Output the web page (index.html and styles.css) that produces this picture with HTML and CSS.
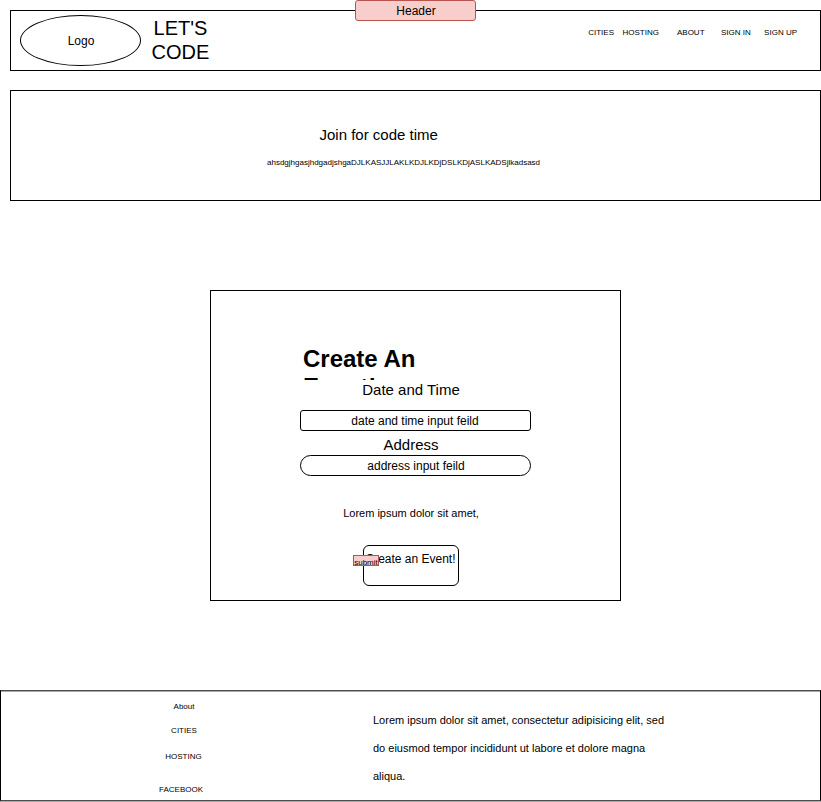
FILE: index.html
```html
<!DOCTYPE html>
<html lang="en">
<head>
<meta charset="utf-8">
<title>Let's Code</title>
<link rel="stylesheet" href="styles.css">
</head>
<body>
<header class="site-header">
  <div class="logo">Logo</div>
  <div class="brand">LET'S CODE</div>
  <nav class="nav">
    <a class="nav-cities">CITIES</a>
    <a class="nav-hosting">HOSTING</a>
    <a class="nav-about">ABOUT</a>
    <a class="nav-signin">SIGN IN</a>
    <a>SIGN UP</a>
  </nav>
  <span class="tag header-tag">Header</span>
</header>
<section class="hero">
  <h2 class="hero-title">Join for code time</h2>
  <p class="hero-text">ahsdgjhgasjhdgadjshgaDJLKASJJLAKLKDJLKDjDSLKDjASLKADSjlkadsasd</p>
</section>
<main class="event-card">
  <h1 class="event-title">Create An Event!</h1>
  <div class="label label-date">Date and Time</div>
  <div class="field">date and time input feild</div>
  <div class="label label-address">Address</div>
  <div class="field field-round">address input feild</div>
  <p class="note">Lorem ipsum dolor sit amet,</p>
  <div class="create-button">Create an Event!<span class="tag submit-tag">submit</span></div>
</main>
<footer class="site-footer">
  <div class="links">
    <a class="link-about">About</a>
    <a class="link-cities">CITIES</a>
    <a class="link-hosting">HOSTING</a>
    <a class="link-facebook">FACEBOOK</a>
  </div>
  <p class="footer-text">Lorem ipsum dolor sit amet, consectetur adipisicing elit, sed do eiusmod tempor incididunt ut labore et dolore magna aliqua.</p>
</footer>
</body>
</html>
```
FILE: styles.css
```css
* {
  box-sizing: border-box;
}

body {
  margin: 0;
  padding-top: 10px;
  width: 821px;
  height: 802px;
  overflow: hidden;
  background: #fff;
  color: #000;
  font: 12px/14px "Liberation Sans", Arial, sans-serif;
}

h1, h2, p {
  margin: 0;
}

.site-header {
  position: relative;
  display: flex;
  height: 61px;
  margin-left: 10px;
  padding: 4px 0 0 9px;
  border: 1px solid #000;
}

.logo {
  width: 121px;
  height: 51px;
  padding-left: 1px;
  border: 1px solid #000;
  border-radius: 50%;
  line-height: 50px;
  text-align: center;
}

.brand {
  width: 61px;
  margin: 1px 0 0 9px;
  font-size: 20px;
  line-height: 24px;
  text-align: center;
}

.nav {
  display: flex;
  margin: 13px 23px 0 auto;
  font-size: 8px;
  line-height: 10px;
  white-space: nowrap;
}

.nav-cities {
  margin-right: 8.5px;
}

.nav-hosting {
  margin-right: 18px;
}

.nav-about {
  margin-right: 16.5px;
}

.nav-signin {
  margin-right: 13.3px;
}

.tag {
  position: absolute;
  background: #f8cecc;
  border: 1px solid #b85450;
  text-align: center;
}

.header-tag {
  top: -11px;
  left: 344px;
  width: 121px;
  height: 21px;
  padding-left: 1px;
  border-radius: 3px;
  line-height: 20px;
}

.hero {
  height: 111px;
  margin: 19px 0 0 10px;
  padding: 35px 0 0 256px;
  border: 1px solid #000;
}

.hero-title {
  margin-left: 52.5px;
  font-size: 15px;
  font-weight: normal;
  line-height: 18px;
}

.hero-text {
  margin-top: 14px;
  font-size: 8px;
  line-height: 10px;
}

.event-card {
  display: flex;
  flex-direction: column;
  align-items: center;
  width: 411px;
  height: 311px;
  margin: 89px 0 0 210px;
  padding-top: 54px;
  border: 1px solid #000;
}

.event-title {
  align-self: flex-start;
  width: 165px;
  height: 35px;
  margin-left: 92px;
  overflow: hidden;
  font-size: 24px;
  line-height: 28px;
}

.label {
  font-size: 15px;
  line-height: 18px;
}

.label-date {
  margin: 1px 9px 0 0;
}

.label-address {
  margin: 5px 9px 0 0;
}

.field {
  width: 231px;
  height: 21px;
  margin-top: 11px;
  padding-right: 1px;
  border: 1px solid #000;
  border-radius: 3px;
  line-height: 20px;
  text-align: center;
}

.field-round {
  margin-top: 1px;
  padding: 0 0 0 1px;
  border-radius: 10.5px;
}

.note {
  margin: 30px 9px 0 0;
  font-size: 11px;
  line-height: 14px;
}

.create-button {
  position: relative;
  width: 96px;
  height: 41px;
  margin: 25px 9px 0 0;
  padding: 6px 1px 0 0;
  border: 1px solid #000;
  border-radius: 6px;
  text-align: center;
  white-space: nowrap;
}

.submit-tag {
  top: 9px;
  left: -11px;
  width: 26px;
  height: 11px;
  font-size: 8px;
  line-height: 14px;
}

.site-footer {
  display: flex;
  height: 111px;
  margin-top: 89px;
  padding: 11px 0 0 132px;
  border: 1px solid #000;
  border-color: #4d4d4d #000;
  box-shadow: inset 0 1px #a9a9a9, 0 1px #a9a9a9;
}

.links {
  display: flex;
  flex-direction: column;
  align-items: center;
  width: 102px;
  font-size: 8px;
  line-height: 10px;
}

.link-cities {
  margin-top: 14px;
}

.link-hosting {
  margin: 16px 1px 0 0;
}

.link-facebook {
  margin: 23px 6px 0 0;
}

.footer-text {
  width: 300px;
  margin: 4px 0 0 138px;
  font-size: 11px;
  line-height: 28px;
}
```
